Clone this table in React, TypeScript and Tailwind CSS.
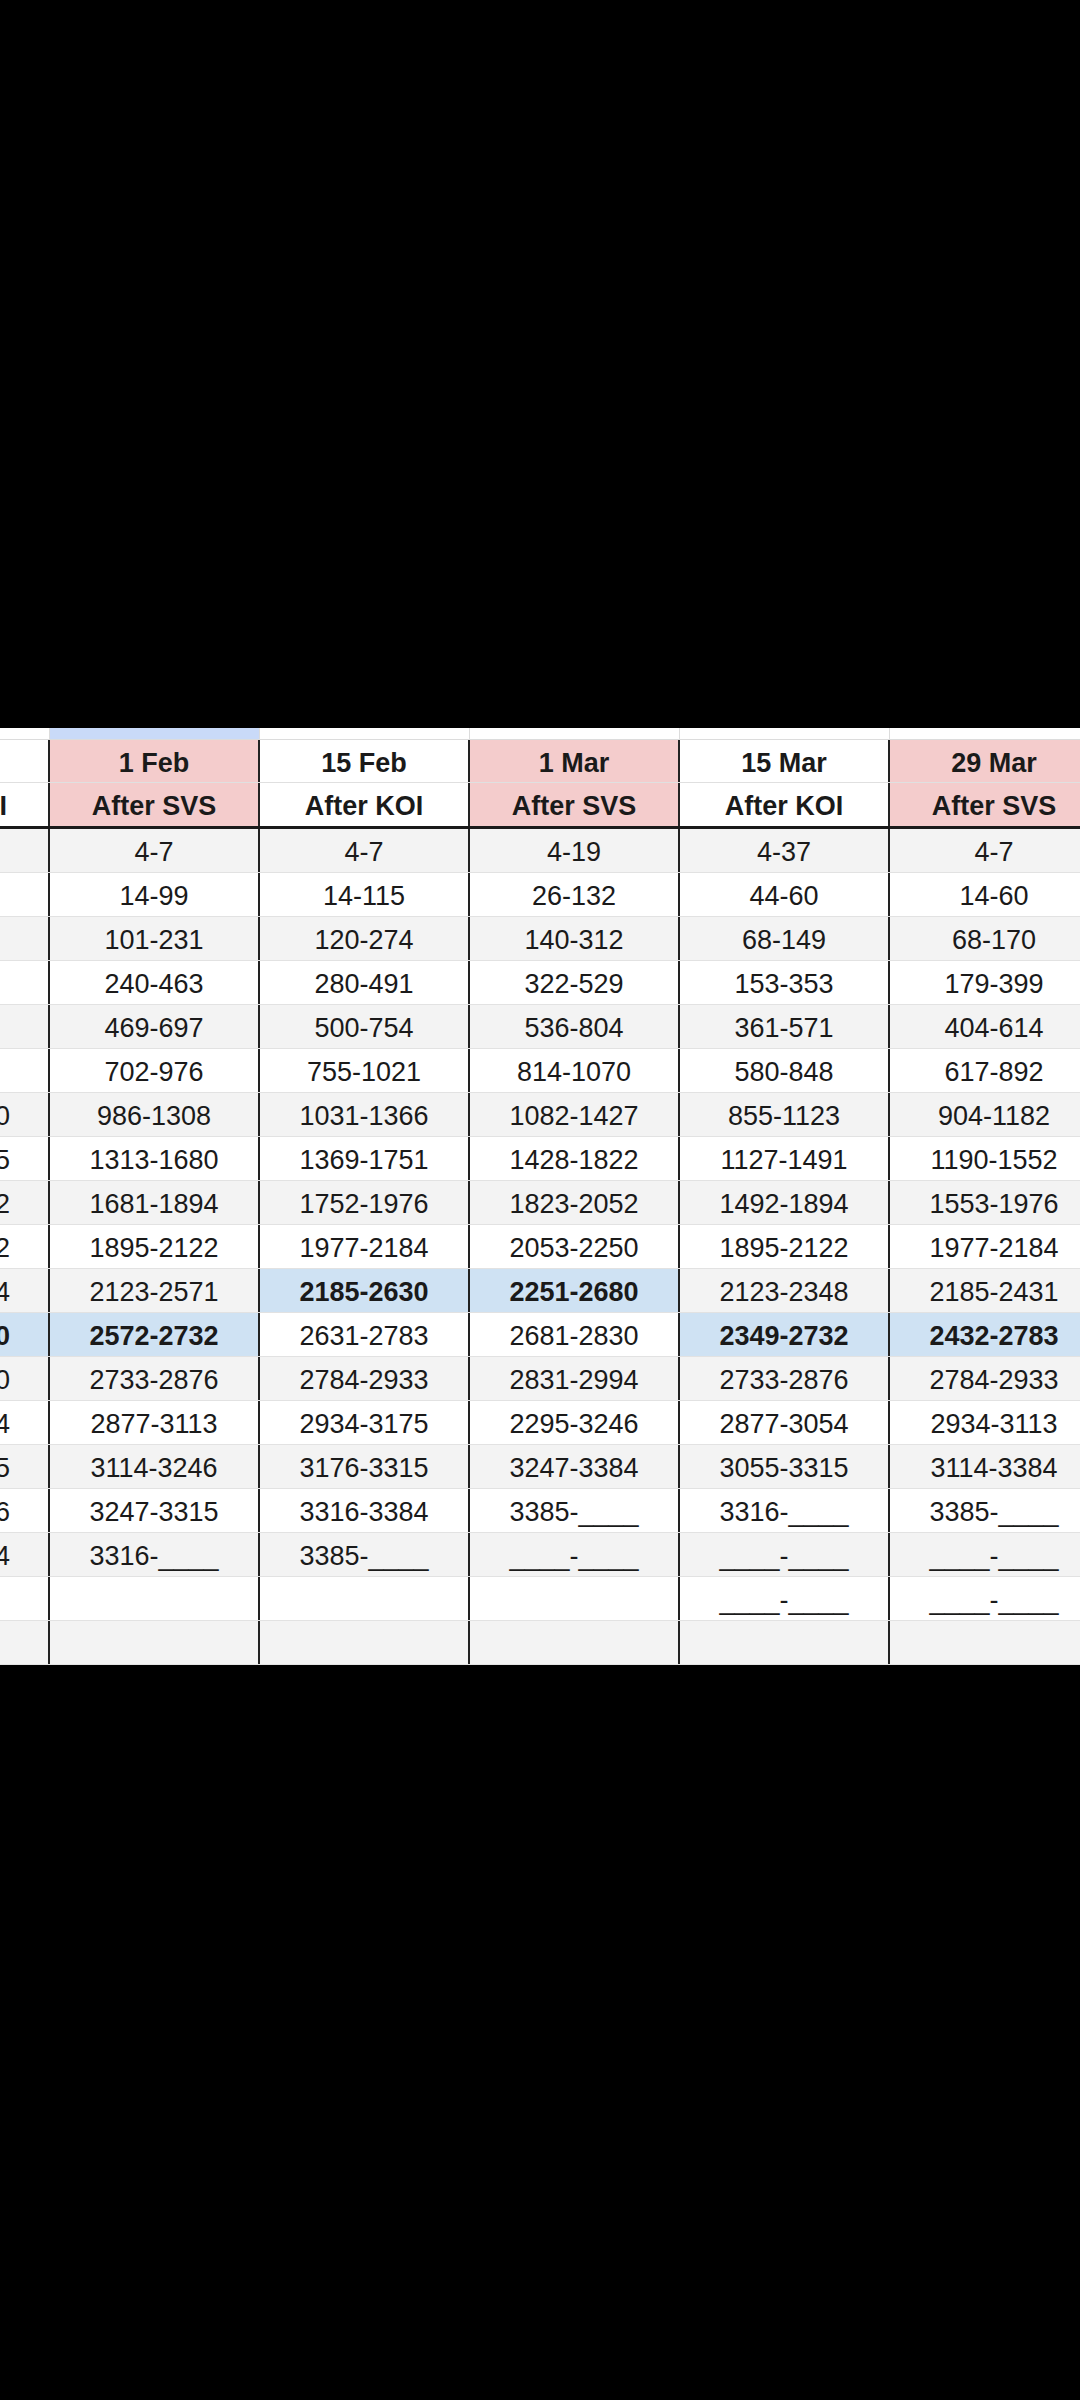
import React from "react";

const cols0 = ["", "", "", "", "", "", "977-1290", "1291-1675", "1676-1892", "1893-2122", "2123-2514", "*2515-2730", "2731-2880", "2881-3114", "3115-3245", "3246-3316", "3317-3384", "", ""];
const cols1 = ["4-7", "14-99", "101-231", "240-463", "469-697", "702-976", "986-1308", "1313-1680", "1681-1894", "1895-2122", "2123-2571", "*2572-2732", "2733-2876", "2877-3113", "3114-3246", "3247-3315", "3316-____", "", ""];
const cols2 = ["4-7", "14-115", "120-274", "280-491", "500-754", "755-1021", "1031-1366", "1369-1751", "1752-1976", "1977-2184", "*2185-2630", "2631-2783", "2784-2933", "2934-3175", "3176-3315", "3316-3384", "3385-____", "", ""];
const cols3 = ["4-19", "26-132", "140-312", "322-529", "536-804", "814-1070", "1082-1427", "1428-1822", "1823-2052", "2053-2250", "*2251-2680", "2681-2830", "2831-2994", "2295-3246", "3247-3384", "3385-____", "____-____", "", ""];
const cols4 = ["4-37", "44-60", "68-149", "153-353", "361-571", "580-848", "855-1123", "1127-1491", "1492-1894", "1895-2122", "2123-2348", "*2349-2732", "2733-2876", "2877-3054", "3055-3315", "3316-____", "____-____", "____-____", ""];
const cols5 = ["4-7", "14-60", "68-170", "179-399", "404-614", "617-892", "904-1182", "1190-1552", "1553-1976", "1977-2184", "2185-2431", "*2432-2783", "2784-2933", "2934-3113", "3114-3384", "3385-____", "____-____", "____-____", ""];

const columns = [cols0, cols1, cols2, cols3, cols4, cols5];
const headers: [string, string, boolean][] = [
  ["15 Jan", "After KOI", false],
  ["1 Feb", "After SVS", true],
  ["15 Feb", "After KOI", false],
  ["1 Mar", "After SVS", true],
  ["15 Mar", "After KOI", false],
  ["29 Mar", "After SVS", true],
];

const font = { fontFamily: '"Liberation Sans", Arial, sans-serif' };

export default function App() {
  return (
    <div className="w-[1080px] h-[2400px] bg-black overflow-hidden" style={font}>
      <div className="h-[728px]" />
      <div className="w-[1080px] overflow-hidden bg-white">
        <div className="-ml-[160px] w-[1260px] flex flex-col text-[#1a1a1a]">
          {/* top strip */}
          <div className="flex h-[12px] border-b border-[#dcdcdc]">
            {headers.map((_, i) => (
              <div
                key={i}
                className={`w-[210px] shrink-0 border-r border-[#dcdcdc] ${i === 1 ? "bg-[#c9daf8]" : "bg-white"}`}
              />
            ))}
          </div>
          {/* header row 1 */}
          <div className="flex h-[43px] border-b border-[#e0e0e0]">
            {headers.map((h, i) => (
              <div
                key={i}
                className={`w-[210px] shrink-0 border-r-2 border-r-[#222] flex items-center justify-center pt-[4px] text-[27px] font-bold whitespace-nowrap ${h[2] ? "bg-[#f4cccc]" : "bg-white"}`}
              >
                {h[0]}
              </div>
            ))}
          </div>
          {/* header row 2 */}
          <div className="flex h-[46px] border-b-[3px] border-[#1a1a1a]">
            {headers.map((h, i) => (
              <div
                key={i}
                className={`w-[210px] shrink-0 border-r-2 border-r-[#222] flex items-center pt-[4px] text-[27px] font-bold whitespace-nowrap ${i === 0 ? "justify-end pr-[41px]" : "justify-center"} ${h[2] ? "bg-[#f4cccc]" : "bg-white"}`}
              >
                {h[1]}
              </div>
            ))}
          </div>
          {/* data rows */}
          {cols1.map((_, r) => (
            <div
              key={r}
              className={`flex h-[44px] border-b border-[#e2e2e2] ${r % 2 === 0 ? "bg-[#f3f3f3]" : "bg-white"}`}
            >
              {columns.map((c, ci) => {
                const raw = c[r];
                const hl = raw.startsWith("*");
                const text = hl ? raw.slice(1) : raw;
                return (
                  <div
                    key={ci}
                    className={`w-[210px] shrink-0 border-r-2 border-r-[#222] flex items-center pt-[3px] text-[27px] whitespace-nowrap ${ci === 0 ? "justify-end pr-[38px]" : "justify-center"} ${hl ? "bg-[#cfe2f3] font-bold" : ""}`}
                  >
                    {text}
                  </div>
                );
              })}
            </div>
          ))}
        </div>
      </div>
    </div>
  );
}
